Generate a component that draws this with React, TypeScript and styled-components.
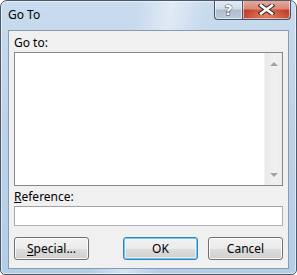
import styled, { createGlobalStyle } from "styled-components";

const Global = createGlobalStyle`
  html, body {
    margin: 0;
    padding: 0;
    background: #ffffff;
  }
  body {
    font-family: "Noto Sans", "Open Sans", sans-serif;
    font-size: 12px;
  }
`;

export default function App() {
  return (
    <>
      <Global />
      <Window>
        <TitleBar>
          <Title>Go To</Title>
          <CaptionButtons>
            <HelpButton aria-label="Help">
              <HelpGlyph>?</HelpGlyph>
            </HelpButton>
            <CloseButton aria-label="Close">
              <svg width="17" height="11" viewBox="0 0 17 11">
                <path
                  d="M3 1.5 L14 9.5 M14 1.5 L3 9.5"
                  stroke="#3b2a28"
                  strokeWidth="4.6"
                  strokeLinecap="square"
                />
                <path
                  d="M3 1.5 L14 9.5 M14 1.5 L3 9.5"
                  stroke="#ffffff"
                  strokeWidth="2.6"
                  strokeLinecap="square"
                />
              </svg>
            </CloseButton>
          </CaptionButtons>
        </TitleBar>
        <Client>
          <Label $top={5}>Go to:</Label>
          <ListBox>
            <ListArea />
            <ScrollBar>
              <Arrow $up />
              <Arrow />
            </ScrollBar>
          </ListBox>
          <Label $top={4}>
            <u>R</u>eference:
          </Label>
          <TextInput />
          <ButtonRow>
            <Button>
              <u>S</u>pecial...
            </Button>
            <Spacer />
            <Button $default>OK</Button>
            <Button>Cancel</Button>
          </ButtonRow>
        </Client>
      </Window>
    </>
  );
}

const Window = styled.div`
  box-sizing: border-box;
  width: 297px;
  height: 275px;
  display: flex;
  flex-direction: column;
  border: 1px solid #4b5a6b;
  border-radius: 7px 7px 5px 5px;
  background:
    linear-gradient(100deg, transparent 40%, rgba(255, 255, 255, 0.45) 50%, transparent 60%),
    linear-gradient(180deg, #c9dbee 0%, #bed3ea 40%, #b3cde9 100%);
  box-shadow: inset 0 0 0 1px rgba(255, 255, 255, 0.55);
  overflow: hidden;
`;

const TitleBar = styled.div`
  height: 29px;
  display: flex;
  justify-content: space-between;
  align-items: flex-start;
  padding-left: 7px;
  padding-right: 5px;
`;

const Title = styled.span`
  margin-top: 7px;
  font-family: "Noto Sans", sans-serif;
  font-size: 12px;
  line-height: 14px;
  color: #000000;
`;

const CaptionButtons = styled.div`
  display: flex;
  margin-top: -1px;
`;

const CaptionButton = styled.div`
  box-sizing: border-box;
  height: 20px;
  display: flex;
  align-items: center;
  justify-content: center;
  border: 1px solid #44546a;
  border-top: none;
  box-shadow: inset 0 0 0 1px rgba(255, 255, 255, 0.55);
`;

const HelpButton = styled(CaptionButton)`
  width: 28px;
  border-right: none;
  border-radius: 0 0 0 4px;
  background: linear-gradient(180deg, #e3eaf2 0%, #d2dce7 48%, #aebccc 52%, #bccad8 100%);
`;

const HelpGlyph = styled.span`
  font-family: "DejaVu Sans", sans-serif;
  font-weight: bold;
  font-size: 14px;
  line-height: 14px;
  color: #ffffff;
  -webkit-text-stroke: 0.9px #3a4656;
  paint-order: stroke fill;
`;

const CloseButton = styled(CaptionButton)`
  width: 49px;
  border-radius: 0 0 4px 0;
  background:
    radial-gradient(ellipse 45% 60% at 50% 80%, rgba(255, 170, 130, 0.55), transparent),
    linear-gradient(180deg, #e6ada2 0%, #d98878 45%, #c0402a 55%, #c9503a 100%);
`;

const Client = styled.div`
  flex: 1;
  margin: 0 7px 5px 7px;
  border: 1px solid #8a9bb0;
  background: #f0f0f0;
  padding: 0 5px 8px 5px;
  display: flex;
  flex-direction: column;
`;

const Label = styled.div<{ $top: number }>`
  height: 14px;
  line-height: 14px;
  margin-top: ${(p) => p.$top}px;
  margin-bottom: 2px;
  color: #000000;
  font-size: 12px;
  u {
    text-decoration-thickness: 1px;
    text-underline-offset: 1px;
  }
`;

const ListBox = styled.div`
  box-sizing: border-box;
  height: 134px;
  display: flex;
  border: 1px solid #828790;
  background: #ffffff;
`;

const ListArea = styled.div`
  flex: 1;
`;

const ScrollBar = styled.div`
  width: 17px;
  display: flex;
  flex-direction: column;
  justify-content: space-between;
  align-items: center;
  padding: 9px 0 8px 0;
  background: linear-gradient(90deg, #e9e9e9, #f1f1f1 60%, #ececec);
  border-left: 1px solid #f4f4f4;
`;

const Arrow = styled.div<{ $up?: boolean }>`
  width: 0;
  height: 0;
  border-left: 4px solid transparent;
  border-right: 4px solid transparent;
  ${(p) =>
    p.$up ? "border-bottom: 4px solid #a3a3a3;" : "border-top: 4px solid #a3a3a3;"}
`;

const TextInput = styled.div`
  box-sizing: border-box;
  height: 20px;
  border: 1px solid #abadb3;
  border-top-color: #a0a2a8;
  background: #ffffff;
`;

const ButtonRow = styled.div`
  margin-top: auto;
  display: flex;
  gap: 10px;
`;

const Spacer = styled.div`
  flex: 1;
`;

const Button = styled.div<{ $default?: boolean }>`
  box-sizing: border-box;
  width: 75px;
  height: 23px;
  display: flex;
  align-items: center;
  justify-content: center;
  border: 1px solid ${(p) => (p.$default ? "#3c7fb1" : "#707070")};
  border-radius: 3px;
  background: linear-gradient(180deg, #f2f2f2 0%, #ebebeb 50%, #dddddd 51%, #cfcfcf 100%);
  box-shadow: ${(p) =>
    p.$default
      ? "inset 0 0 0 1px #6ccbf2, inset 0 0 0 2px rgba(255,255,255,0.5)"
      : "inset 0 0 0 1px rgba(255, 255, 255, 0.8)"};
  font-size: 12px;
  color: #000000;
  u {
    text-decoration-thickness: 1px;
    text-underline-offset: 2px;
  }
`;
